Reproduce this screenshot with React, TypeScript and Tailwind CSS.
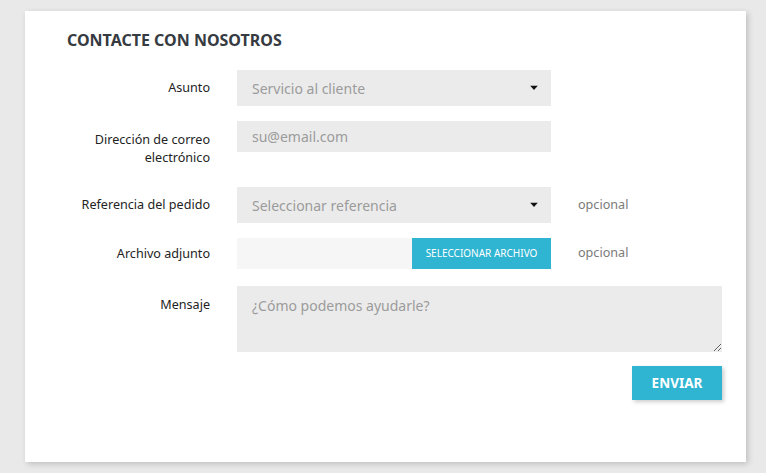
import React from 'react'

const font = { fontFamily: '"Noto Sans", "Open Sans", sans-serif' }

function Caret() {
  return (
    <svg width="8" height="5" viewBox="0 0 8 5" className="absolute right-[13px] top-1/2 -translate-y-1/2">
      <path d="M0 0 H8 L4 4.5 Z" fill="#111" />
    </svg>
  )
}

function Label({ children, className = '' }: { children: React.ReactNode; className?: string }) {
  return (
    <label className={`w-[143px] shrink-0 text-right text-[12.6px] leading-[18px] text-[#232323] ${className}`}>
      {children}
    </label>
  )
}

function Optional() {
  return <span className="ml-[27px] text-[12.6px] text-[#7a7a7a]">opcional</span>
}

export default function App() {
  return (
    <div className="min-h-screen bg-[#e9e9e9] pt-[11px] pl-[25px]" style={font}>
      <div className="w-[721px] h-[451px] bg-white shadow-[2px_2px_6px_0_rgba(0,0,0,0.18)] pl-[42px] pt-[17px]">
        <h1 className="text-[16px] leading-[24px] font-bold uppercase text-[#363a41] mb-[18px]">
          Contacte con nosotros
        </h1>

        {/* Asunto */}
        <div className="flex items-center mb-[15px]">
          <Label>Asunto</Label>
          <div className="relative ml-[27px] w-[314px] h-[36px] bg-[#ebebeb] pl-[15px] flex items-center text-[14px] text-[#9b9b9b]">
            Servicio al cliente
            <Caret />
          </div>
        </div>

        {/* Email */}
        <div className="flex items-start mb-[20px]">
          <Label className="pt-[10px]">Dirección de correo electrónico</Label>
          <input
            placeholder="su@email.com"
            className="ml-[27px] w-[314px] h-[31px] bg-[#ebebeb] pl-[15px] text-[14px] outline-none placeholder:text-[#9b9b9b]"
          />
        </div>

        {/* Referencia */}
        <div className="flex items-center mb-[15px]">
          <Label>Referencia del pedido</Label>
          <div className="relative ml-[27px] w-[314px] h-[36px] bg-[#ebebeb] pl-[15px] flex items-center text-[14px] text-[#9b9b9b]">
            Seleccionar referencia
            <Caret />
          </div>
          <Optional />
        </div>

        {/* Archivo */}
        <div className="flex items-center mb-[17px]">
          <Label>Archivo adjunto</Label>
          <div className="ml-[27px] w-[314px] h-[31px] flex">
            <div className="flex-1 bg-[#f6f6f6]" />
            <button className="w-[139px] bg-[#2fb5d2] text-white text-[10px] uppercase">
              Seleccionar archivo
            </button>
          </div>
          <Optional />
        </div>

        {/* Mensaje */}
        <div className="flex items-start">
          <Label className="pt-[10px]">Mensaje</Label>
          <textarea
            placeholder="¿Cómo podemos ayudarle?"
            className="ml-[27px] w-[485px] h-[66px] bg-[#ebebeb] px-[15px] pt-[9px] text-[14px] outline-none placeholder:text-[#9b9b9b]"
          />
        </div>

        <div className="flex justify-end w-[655px] mt-[14px]">
          <button className="w-[90px] h-[34px] bg-[#2fb5d2] text-white text-[13.5px] font-bold uppercase shadow-[2px_2px_4px_0_rgba(0,0,0,0.2)]">
            Enviar
          </button>
        </div>
      </div>
    </div>
  )
}
